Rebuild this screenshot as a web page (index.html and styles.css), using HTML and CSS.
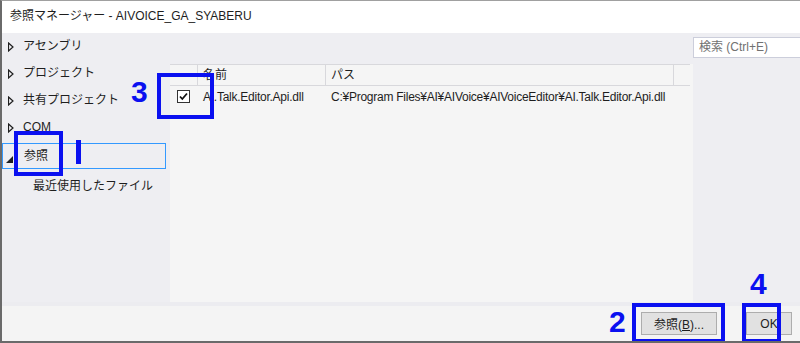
FILE: index.html
```html
<!DOCTYPE html>
<html lang="ja">
<head>
  <meta charset="UTF-8" />
  <title>参照マネージャー</title>
  <link rel="stylesheet" href="styles.css">
</head>
<body>
  <div class="window">
    <div class="titlebar">参照マネージャー - AIVOICE_GA_SYABERU</div>

    <div class="content">
      <!-- 左のツリー -->
      <ul class="tree">
        <li class="node"><svg class="arrow" viewBox="0 0 6 10"><path d="M0.5 1 L5 5 L0.5 9 Z" fill="none" stroke="#1e1e1e" stroke-width="1.2"/></svg>アセンブリ</li>
        <li class="node"><svg class="arrow" viewBox="0 0 6 10"><path d="M0.5 1 L5 5 L0.5 9 Z" fill="none" stroke="#1e1e1e" stroke-width="1.2"/></svg>プロジェクト</li>
        <li class="node"><svg class="arrow" viewBox="0 0 6 10"><path d="M0.5 1 L5 5 L0.5 9 Z" fill="none" stroke="#1e1e1e" stroke-width="1.2"/></svg>共有プロジェクト</li>
        <li class="node"><svg class="arrow" viewBox="0 0 6 10"><path d="M0.5 1 L5 5 L0.5 9 Z" fill="none" stroke="#1e1e1e" stroke-width="1.2"/></svg>COM</li>
        <li class="node open"><svg class="arrow" viewBox="0 0 7 7"><path d="M7 0 L7 7 L0 7 Z" fill="#1e1e1e"/></svg>参照</li>
        <li class="node child">最近使用したファイル</li>
      </ul>

      <!-- 中央のリスト -->
      <div class="center">
        <div class="toolbar"></div>
        <div class="list">
          <div class="row head">
            <div class="col c-check"></div>
            <div class="col c-name">名前</div>
            <div class="col c-path">パス</div>
            <div class="col c-rest"></div>
          </div>
          <div class="row item">
            <div class="col c-check">
              <span class="checkbox"><svg viewBox="0 0 11 11"><path d="M2 5.5 L4.3 8 L9 2.5" fill="none" stroke="#111" stroke-width="1.8"/></svg></span>
            </div>
            <div class="col c-name">AI.Talk.Editor.Api.dll</div>
            <div class="col c-path">C:¥Program Files¥AI¥AIVoice¥AIVoiceEditor¥AI.Talk.Editor.Api.dll</div>
          </div>
        </div>
      </div>

      <!-- 右の検索 -->
      <div class="side">
        <div class="search">検索 (Ctrl+E)</div>
      </div>
    </div>

    <div class="footer">
      <button class="btn browse">参照(<u>B</u>)...</button>
      <button class="btn ok">OK</button>
    </div>

    <!-- 注釈 -->
    <div class="mark box1"></div>
    <div class="mark bar1"></div>
    <div class="mark box3"></div>
    <div class="num n3">3</div>
    <div class="mark box2"></div>
    <div class="num n2">2</div>
    <div class="mark box4"></div>
    <div class="num n4">4</div>
  </div>
</body>
</html>
```

FILE: styles.css
```css
:root {
  --panel-bg: #eeeef2;
  --list-bg: #f5f5f5;
  --text: #1e1e1e;
  --mark: #0a10f0;
}

body {
  margin: 0;
  font-family: "Liberation Sans", "Noto Sans CJK JP", sans-serif;
  font-size: 12px;
  color: var(--text);
}

.window {
  position: relative;
  width: 800px;
  height: 343px;
  box-sizing: border-box;
  border-left: 2px solid #6a6a6a;
  border-bottom: 2px solid #6a6a6a;
  border-top: 1px solid #a0a0a0;
  background: var(--list-bg);
  display: flex;
  flex-direction: column;
  overflow: hidden;
}

.titlebar {
  height: 32px;
  background: #fff;
  line-height: 31px;
  padding-left: 8px;
}

.content {
  height: 269px;
  display: flex;
  background: var(--panel-bg);
  border-bottom: 4px solid #ececf0;
}

/* ツリー */
.tree {
  list-style: none;
  margin: 0;
  padding: 0;
  width: 168px;
}

.node {
  height: 27px;
  line-height: 27px;
  padding-left: 21px;
  position: relative;
}

.arrow {
  position: absolute;
  left: 6px;
  top: 9px;
  width: 6px;
  height: 10px;
}

.node.open {
  height: 24px;
  line-height: 24px;
  margin: 2px 4px 2px 0;
  border: 1px solid #3399ff;
}

.node.open .arrow {
  left: 3px;
  top: 12px;
  width: 7px;
  height: 7px;
}

.node.child {
  padding-left: 31px;
  height: 30px;
  line-height: 30px;
}

/* 中央リスト */
.center {
  width: 523px;
  display: flex;
  flex-direction: column;
}

.toolbar {
  height: 31px;
}

.list {
  flex: 1;
  background: var(--list-bg);
  padding-right: 2px;
}

.row {
  display: flex;
  height: 20px;
  line-height: 20px;
}

.head {
  border-top: 1px solid #d8d8dc;
  border-bottom: 1px solid #d8d8dc;
  width: 520px;
}

.head .col {
  border-right: 1px solid #d8d8dc;
}

.item {
  height: 23px;
  line-height: 23px;
  letter-spacing: -0.25px;
}

.col {
  box-sizing: border-box;
  padding-left: 5px;
  white-space: nowrap;
}

.c-check { width: 28px; padding-left: 7px; }
.c-name { width: 128px; }
.c-path { width: 348px; }
.c-rest { flex: 1; border-right: none !important; }

.checkbox {
  display: inline-block;
  width: 13px;
  height: 13px;
  box-sizing: border-box;
  border: 1px solid #333;
  background: #fff;
  vertical-align: middle;
  margin-top: -3px;
}

.checkbox svg {
  display: block;
  width: 11px;
  height: 11px;
}

/* 右パネル */
.side {
  flex: 1;
  padding-top: 4px;
}

.search {
  height: 19px;
  line-height: 19px;
  border: 1px solid #cccedb;
  border-right: none;
  background: #fff;
  color: #717171;
  padding-left: 5px;
}

/* フッター */
.footer {
  flex: 1;
  display: flex;
  justify-content: flex-end;
  align-items: center;
  gap: 29px;
  padding-right: 8px;
  background: #f4f4f4;
}

.btn {
  height: 23px;
  font: inherit;
  color: var(--text);
  background: #e1e1e1;
  border: 1px solid #adadad;
  padding: 0;
}

.browse { width: 76px; }
.ok { width: 46px; }

/* 注釈 */
.mark {
  position: absolute;
  border: 4px solid var(--mark);
  box-sizing: border-box;
}

.box1 { left: 12px; top: 130px; width: 49px; height: 45px; }
.box3 { left: 155px; top: 72px; width: 57px; height: 46px; }
.box2 { left: 630px; top: 302px; width: 93px; height: 40px; }
.box4 { left: 740px; top: 302px; width: 39px; height: 40px; }

.bar1 {
  left: 74px;
  top: 139px;
  width: 5px;
  height: 24px;
  border: none;
  background: var(--mark);
}

.num {
  position: absolute;
  color: var(--mark);
  font-family: "Liberation Sans", Arial, sans-serif;
  font-weight: bold;
  font-size: 30px;
  line-height: 30px;
}

.n3 { left: 129px; top: 76px; }
.n2 { left: 607px; top: 306px; }
.n4 { left: 748px; top: 268px; }
```
